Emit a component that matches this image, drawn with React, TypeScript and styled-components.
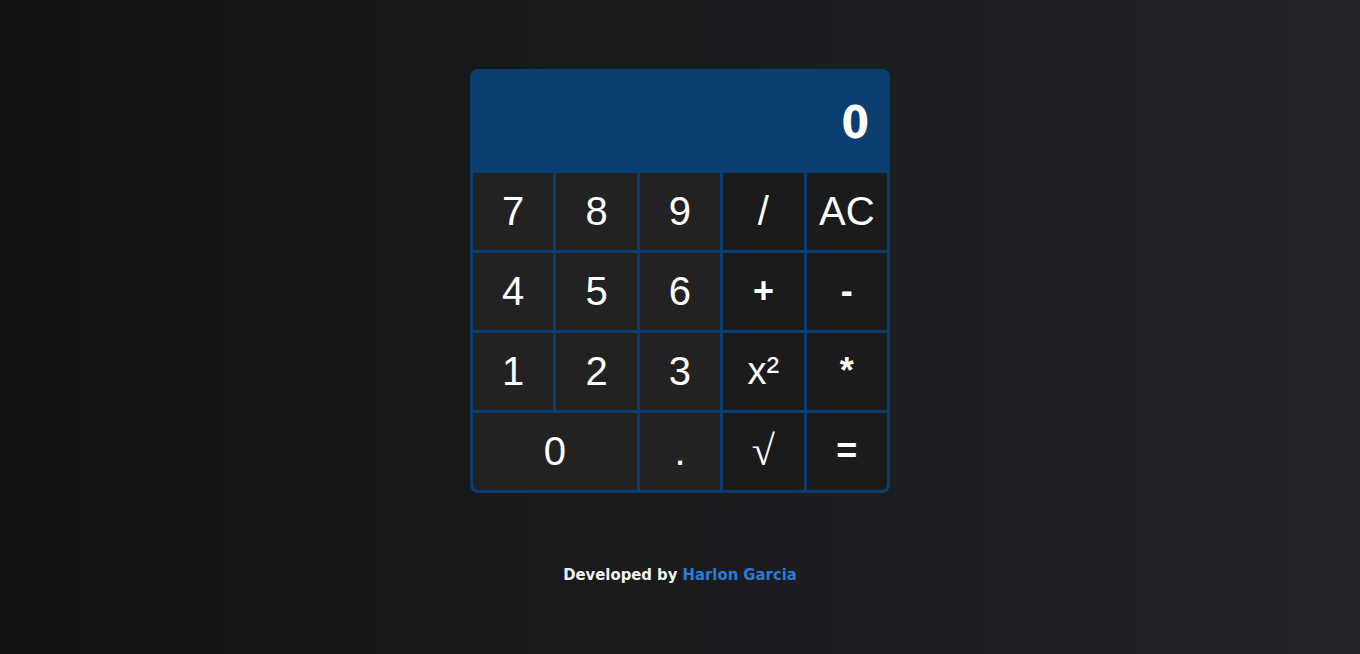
import React from "react";
import styled, { createGlobalStyle } from "styled-components";

const Global = createGlobalStyle`
  html, body { margin: 0; padding: 0; }
  body {
    background: linear-gradient(90deg, #121213 0%, #1a1b1d 50%, #222428 100%);
    min-height: 100vh;
    font-family: "Liberation Sans", Arial, sans-serif;
  }
`;

const Page = styled.main`
  min-height: 100vh;
  box-sizing: border-box;
  padding-bottom: 2px;
  display: flex;
  flex-direction: column;
  align-items: center;
  justify-content: center;
  gap: 73px;
`;

const Calculator = styled.div`
  width: 420px;
  background: #0b3e70;
  border-radius: 8px;
  overflow: hidden;
`;

const Display = styled.div`
  height: 101px;
  display: flex;
  align-items: center;
  justify-content: flex-end;
  padding: 6px 21px 0 20px;
  box-sizing: border-box;
  color: #ffffff;
  font-family: "DejaVu Sans Condensed", "DejaVu Sans", sans-serif;
  font-weight: 700;
  font-size: 44px;
`;

const Keys = styled.div`
  display: grid;
  grid-template-columns: repeat(5, 1fr);
  grid-auto-rows: 77px;
  gap: 3px;
  padding: 3px;
`;

type Variant = "digit" | "op" | "strong" | "power" | "root";

const sizes: Record<Variant, string> = {
  digit: "40px",
  op: "40px",
  strong: "36px",
  power: "38px",
  root: "42px",
};

const Key = styled.button<{ $variant: Variant; $wide?: boolean; $radius?: string }>`
  border: none;
  margin: 0;
  padding: 0;
  background: ${(p) => (p.$variant === "digit" ? "#222222" : "#1b1b1b")};
  color: #ffffff;
  font-family: ${(p) =>
    p.$variant === "root" ? '"Liberation Serif", "Times New Roman", serif' : '"Liberation Sans", Arial, sans-serif'};
  font-size: ${(p) => sizes[p.$variant]};
  font-weight: ${(p) => (p.$variant === "strong" ? 700 : 400)};
  grid-column: ${(p) => (p.$wide ? "span 2" : "auto")};
  border-radius: ${(p) => p.$radius || "0"};
  display: flex;
  align-items: center;
  justify-content: center;
  cursor: pointer;
`;

const Footer = styled.p`
  margin: 0;
  color: #f2f2f2;
  font-family: "DejaVu Sans Condensed", "DejaVu Sans", sans-serif;
  font-weight: 700;
  font-size: 16.5px;
  line-height: 18px;
`;

const Link = styled.a`
  color: #2a7bd6;
  text-decoration: none;
`;

type K = { label: string; v: Variant; wide?: boolean; radius?: string };

const keys: K[] = [
  { label: "7", v: "digit" }, { label: "8", v: "digit" }, { label: "9", v: "digit" }, { label: "/", v: "op" }, { label: "AC", v: "op" },
  { label: "4", v: "digit" }, { label: "5", v: "digit" }, { label: "6", v: "digit" }, { label: "+", v: "strong" }, { label: "-", v: "strong" },
  { label: "1", v: "digit" }, { label: "2", v: "digit" }, { label: "3", v: "digit" }, { label: "x²", v: "power" }, { label: "*", v: "strong" },
  { label: "0", v: "digit", wide: true, radius: "0 0 0 6px" }, { label: ".", v: "digit" }, { label: "√", v: "root" }, { label: "=", v: "strong", radius: "0 0 6px 0" },
];

export default function App() {
  return (
    <>
      <Global />
      <Page>
        <Calculator>
          <Display>0</Display>
          <Keys>
            {keys.map((k) => (
              <Key key={k.label} $variant={k.v} $wide={k.wide} $radius={k.radius}>
                {k.label}
              </Key>
            ))}
          </Keys>
        </Calculator>
        <Footer>
          Developed by <Link href="#">Harlon Garcia</Link>
        </Footer>
      </Page>
    </>
  );
}
